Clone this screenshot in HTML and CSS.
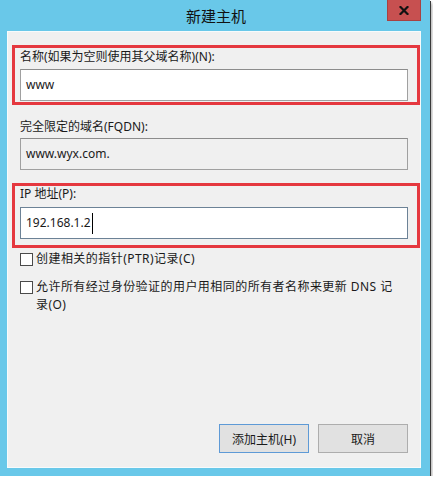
FILE: index.html
```html
<!DOCTYPE html>
<html lang="zh-CN">
<head>
  <meta charset="UTF-8">
  <title>新建主机</title>
  <link rel="stylesheet" href="styles.css">
</head>
<body>
  <div class="window">
    <div class="titlebar">
      <span class="title">新建主机</span>
      <div class="close">
        <svg width="10" height="9" viewBox="0 0 10 9">
          <path d="M1.5 1 L8.5 8 M8.5 1 L1.5 8" stroke="#111" stroke-width="2.2" stroke-linecap="square"/>
        </svg>
      </div>
    </div>

    <div class="content">
      <div class="mark mark-name">
        <div class="label">名称(如果为空则使用其父域名称)(N):</div>
        <div class="field">www</div>
      </div>

      <div class="label label-fqdn">完全限定的域名(FQDN):</div>
      <div class="field field-readonly">www.wyx.com.</div>

      <div class="mark mark-ip">
        <div class="label">IP 地址(P):</div>
        <div class="field field-focus">192.168.1.2<span class="caret"></span></div>
      </div>

      <div class="check check-first">
        <span class="box"></span>
        <span class="check-text">创建相关的指针(PTR)记录(C)</span>
      </div>
      <div class="check">
        <span class="box"></span>
        <span class="check-text">允许所有经过身份验证的用户用相同的所有者名称来更新 DNS 记<br>录(O)</span>
      </div>

      <div class="buttons">
        <div class="button button-default">添加主机(H)</div>
        <div class="button">取消</div>
      </div>
    </div>
  </div>
</body>
</html>
```

FILE: styles.css
```css
body {
  margin: 0;
  background: #ffffff;
  font-family: "Noto Sans", "Noto Sans CJK SC", sans-serif;
  color: #1a1a1a;
}

.window {
  position: relative;
  width: 430px;
  height: 476px;
  background: #69c8e9;
  display: flex;
  flex-direction: column;
  box-shadow: 1px 1px 0 #3a3a3a, 2px 3px 3px rgba(0, 0, 0, 0.35);
}

.titlebar {
  height: 31px;
  display: flex;
  align-items: center;
  justify-content: center;
  flex-shrink: 0;
}

.title {
  font-family: "Noto Sans CJK SC", sans-serif;
  font-size: 15px;
  color: #111;
  margin-left: 2px;
}

.close {
  position: absolute;
  top: 0;
  right: 9px;
  width: 34px;
  height: 21px;
  background: #c75050;
  box-sizing: border-box;
  border: 1px solid #a84141;
  border-top: none;
  display: flex;
  align-items: center;
  justify-content: center;
}

.content {
  flex: 1;
  margin: 0 9px 8px 7px;
  background: #f0f0f0;
  border: 1px solid #f7fbfc;
  padding: 13px 0 14px 4px;
  display: flex;
  flex-direction: column;
}

.mark {
  border: 3px solid #e5383f;
  padding-left: 5px;
}

.mark-name {
  padding-top: 1px;
  padding-bottom: 1px;
}

.mark-ip {
  margin-top: 13px;
  padding-bottom: 6px;
}

.label {
  font-size: 12px;
  line-height: 16px;
  margin-bottom: 4px;
}

.mark-ip .label {
  margin-bottom: 5px;
}

.label-fqdn {
  margin: 14px 0 3px 8px;
}

.field {
  width: 388px;
  height: 32px;
  box-sizing: border-box;
  background: #ffffff;
  border: 1px solid #a0a0a0;
  border-top-color: #8c8c8c;
  font-size: 12px;
  line-height: 30px;
  padding-left: 5px;
  display: flex;
  align-items: center;
}

.field-readonly {
  background: #f0f0f0;
  margin-left: 8px;
}

.field-focus {
  border-color: #6c8296;
}

.caret {
  display: inline-block;
  width: 1px;
  height: 21px;
  background: #000;
  margin-left: 1px;
}

.check {
  display: flex;
  align-items: flex-start;
  margin: 10px 0 0 8px;
  font-size: 12px;
  line-height: 18px;
}

.check-first {
  margin-top: 2px;
}

.check-text {
  letter-spacing: 0.45px;
}

.box {
  width: 13px;
  height: 13px;
  box-sizing: border-box;
  border: 1px solid #4a4a4a;
  background: #ffffff;
  margin-top: 3px;
  margin-right: 3px;
  flex-shrink: 0;
}

.buttons {
  margin-top: auto;
  display: flex;
  justify-content: flex-end;
  gap: 9px;
  padding-right: 12px;
}

.button {
  width: 90px;
  height: 29px;
  box-sizing: border-box;
  background: #e1e1e1;
  border: 1px solid #adadad;
  font-size: 12px;
  display: flex;
  align-items: center;
  justify-content: center;
}

.button-default {
  border-color: #5e9ad6;
}
```
